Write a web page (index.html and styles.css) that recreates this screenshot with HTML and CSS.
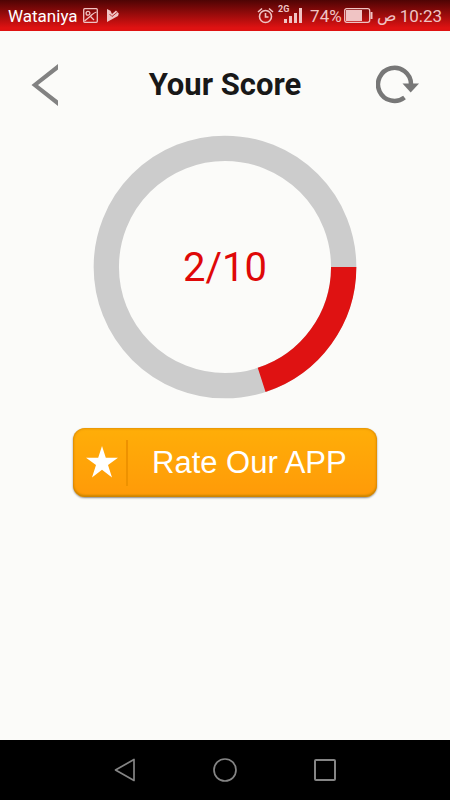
FILE: index.html
```html
<!DOCTYPE html>
<html lang="en">
<head>
    <meta charset="UTF-8">
    <meta name="viewport" content="width=device-width, initial-scale=1.0">
    <title>Your Score</title>
    <link rel="stylesheet" href="styles.css">
</head>
<body>
    <!-- Status bar -->
    <div class="status-bar">
        <div class="status-left">
            <span class="carrier">Wataniya</span>
            <svg width="15" height="15" viewBox="0 0 15 15" fill="none" stroke="#f0c4c4" stroke-width="1.3">
                <rect x="0.7" y="0.7" width="13.6" height="13.6" rx="1"/>
                <circle cx="5" cy="5.3" r="1.9"/>
                <path d="M1.500 13 L7 8.5 C9 7 10 5 13.500 4 M7.500 8.5 L11 12"/>
            </svg>
            <svg class="play-icon" width="13" height="15" viewBox="0 0 13 15">
                <path d="M1 1 L4.5 2.8 L6 6 L10 2.5 L12.8 5.5 L12 8 L1 14 Z" fill="#f0c4c4"/>
                <path d="M3.5 6 L6 8.5 L11.5 4" fill="none" stroke="#b83030" stroke-width="1"/>
            </svg>
        </div>
        <div class="status-right">
            <svg width="17" height="18" viewBox="0 0 17 18" fill="none" stroke="#f0c4c4" stroke-width="1.6">
                <circle cx="8.5" cy="9.5" r="6"/>
                <path d="M8.5 6 V10 H11.5 M1 5 L5 1.5 M12 1.5 L16 5"/>
            </svg>
            <div class="signal">
                <span class="network">2G</span>
                <svg width="26" height="22" viewBox="0 0 26 22" fill="#f0c4c4">
                    <rect x="6" y="14" width="3" height="4"/>
                    <rect x="11" y="11" width="3" height="7"/>
                    <rect x="16" y="8" width="3" height="10"/>
                    <rect x="21" y="3" width="3" height="15"/>
                </svg>
            </div>
            <span class="percent">74%</span>
            <svg width="29" height="15" viewBox="0 0 29 15">
                <rect x="0.7" y="0.7" width="25" height="13.6" rx="2" fill="none" stroke="#f0c4c4" stroke-width="1.3"/>
                <rect x="2" y="2" width="16" height="11" fill="#f0c4c4"/>
                <rect x="26.5" y="4" width="2" height="7" fill="#f0c4c4"/>
            </svg>
            <span class="period" lang="ar">ص</span>
            <span class="clock">10:23</span>
        </div>
    </div>

    <header class="header">
        <button class="icon-btn" aria-label="Back">
            <svg width="52" height="44" viewBox="0 0 52 44">
                <path d="M36 1 V6.5 L16 22 L36 37.5 V43 L9.5 22 Z" fill="#828282"/>
            </svg>
        </button>
        <h1>Your Score</h1>
        <button class="icon-btn" aria-label="Restart">
            <svg width="52" height="44" viewBox="0 0 52 44">
                <path d="M28.5 34.5 A16.5 16.5 0 1 1 35 21" fill="none" stroke="#777" stroke-width="4.5"/>
                <path d="M26.5 20.5 H43 L34.7 29.5 Z" fill="#777"/>
            </svg>
        </button>
    </header>

    <main class="content">
        <div class="score">
            <svg viewBox="0 0 264 264">
                <circle cx="132" cy="132" r="118.7" fill="none" stroke="#ccc" stroke-width="25.3"/>
                <circle cx="132" cy="132" r="118.7" fill="none" stroke="#df1212" stroke-width="25.3" pathLength="10" stroke-dasharray="2 8"/>
            </svg>
            <span class="score-text">2/10</span>
        </div>

        <button class="rate-btn">
            <span class="rate-star">
                <svg width="32" height="32" viewBox="0 0 32 32" fill="#fff">
                    <path d="M16 0 L19.8 11.8 H32 L22 19 L26 31.5 L16 23.8 L6 31.5 L10 19 L0 11.8 H12.2 Z"/>
                </svg>
            </span>
            <span class="rate-label">Rate Our APP</span>
        </button>
    </main>

    <!-- System navigation -->
    <nav class="nav-bar">
        <button class="nav-btn" aria-label="Back">
            <svg width="24" height="24" viewBox="0 0 24 24" fill="none" stroke="#858585" stroke-width="1.7" stroke-linejoin="round">
                <path d="M21 1.5 V22.5 L2.5 12 Z"/>
            </svg>
        </button>
        <button class="nav-btn" aria-label="Home">
            <svg width="24" height="24" viewBox="0 0 24 24" fill="none" stroke="#858585" stroke-width="1.7">
                <circle cx="12" cy="12" r="11"/>
            </svg>
        </button>
        <button class="nav-btn" aria-label="Recent apps">
            <svg width="24" height="24" viewBox="0 0 24 24" fill="none" stroke="#858585" stroke-width="2">
                <rect x="2" y="2" width="20" height="20" rx="1"/>
            </svg>
        </button>
    </nav>
</body>
</html>
```

FILE: styles.css
```css
* {
    box-sizing: border-box;
}
body {
    margin: 0;
    min-height: 100vh;
    display: flex;
    flex-direction: column;
    background-color: #fbfbf9;
    font-family: Roboto, "Noto Sans", sans-serif;
}
svg {
    display: block;
}
button {
    padding: 0;
    border: none;
    background: none;
    cursor: pointer;
}
.status-bar {
    display: flex;
    justify-content: space-between;
    height: 31px;
    padding: 0 8px;
    background: linear-gradient(#4e0404, #df1212 90%);
    color: #f0c4c4;
    font-size: 17px;
    line-height: 32px;
}
.status-left,
.status-right {
    display: flex;
    align-items: center;
}
.carrier {
    margin-right: 5px;
    color: #fff;
}
.play-icon {
    margin-left: 8px;
}
.signal {
    position: relative;
    margin: 0 6px 0 4px;
}
.network {
    position: absolute;
    top: 0;
    left: 0;
    font-size: 9px;
    font-weight: bold;
    line-height: 9px;
}
.percent {
    margin-right: 2px;
}
.period {
    margin: 0 4px;
    font-size: 16px;
}
.header {
    display: flex;
    align-items: center;
    justify-content: space-between;
    padding: 32px 22px 0;
}
.header h1 {
    margin: 0;
    color: #181818;
    font-size: 31px;
    line-height: 44px;
}
.icon-btn {
    width: 52px;
    height: 44px;
}
.content {
    flex: 1;
    display: flex;
    flex-direction: column;
    align-items: center;
    padding-top: 28px;
}
.score {
    display: grid;
    place-items: center;
    width: 264px;
    max-width: 80%;
}
.score svg,
.score-text {
    grid-area: 1 / 1;
}
.score svg {
    width: 100%;
}
.score-text {
    color: #df0808;
    font-size: 40px;
}
.rate-btn {
    display: flex;
    align-items: center;
    width: 304px;
    max-width: 90%;
    height: 69px;
    margin-top: 29px;
    border-radius: 12px;
    background: linear-gradient(#ffae08, #ff9a08);
    box-shadow: inset 0 0 3px #c87800, inset 0 -2px 2px #d08c00, 0 1px 2px #888;
    color: #fff;
    font-family: "Liberation Sans", Arial, sans-serif;
    font-size: 31px;
}
.rate-star {
    display: flex;
    align-items: center;
    height: 46px;
    padding: 0 8px 2px 13px;
    border-right: 2px solid #ee9200;
}
.rate-label {
    padding-left: 24px;
    white-space: nowrap;
}
.nav-bar {
    display: flex;
    justify-content: center;
    gap: 76px;
    padding: 18px 0;
    background-color: #000;
}
.nav-btn {
    width: 24px;
    height: 24px;
}
```
